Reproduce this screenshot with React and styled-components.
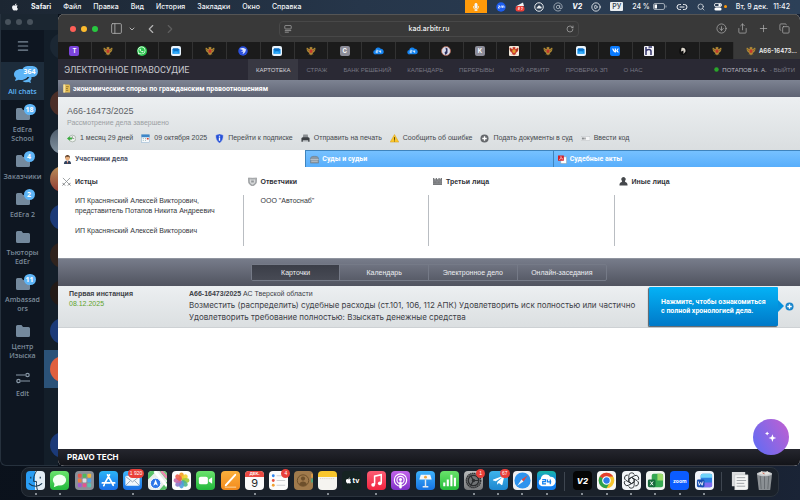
import React, { useState } from "react";
import styled, { createGlobalStyle, css } from "styled-components";
import {
  Search,
  AtSign,
  Link2,
  PanelLeft,
  ChevronDown,
  ChevronLeft,
  ChevronRight,
  RotateCw,
  CircleArrowDown,
  Share,
  Plus,
  Copy,
  Menu,
  CirclePlay,
} from "lucide-react";
import { FaApple, FaMicrophone, FaWhatsapp, FaVk, FaTelegramPlane } from "react-icons/fa";

const GlobalStyle = createGlobalStyle`
  * {
    box-sizing: border-box;
  }

  body {
    margin: 0;
    background: #0b121c;
    font-family: "Liberation Sans", Arial, sans-serif;
  }

  button, input {
    margin: 0;
    padding: 0;
    border: 0;
    background: none;
    color: inherit;
    font: inherit;
  }

  button {
    cursor: pointer;
  }

  a {
    color: inherit;
    text-decoration: none;
  }

  svg {
    display: block;
    flex: none;
  }
`;

const Desktop = styled.div`
  min-height: 100vh;
  display: flex;
  flex-direction: column;
  background: linear-gradient(100deg, #0a111b, #0e1520 60%, #1a2436);
`;

/* ---------- menu bar ---------- */

const MenuBar = styled.header`
  height: 14px;
  padding: 0 10px 1px 11px;
  display: flex;
  justify-content: space-between;
  align-items: center;
  background: linear-gradient(90deg, #1c2632, #26364a 45%, #2c4058);
  color: #f2f4f7;
  font-family: Inter, sans-serif;
  font-size: 7px;
  font-weight: 500;
`;

const MenuList = styled.nav`
  display: flex;
  align-items: center;
  gap: 12px;
`;

const MenuButton = styled.button`
  font-weight: ${(props) => (props.$bold ? 700 : 500)};
`;

const StatusList = styled.div`
  display: flex;
  align-items: center;
  gap: 9px;
  white-space: nowrap;
`;

const MicBadge = styled.span`
  width: 22px;
  height: 13px;
  display: flex;
  align-items: center;
  justify-content: center;
  background: #ff9a0a;
`;

const Keyboard = styled.span`
  padding: 0 2px;
  border-radius: 1px;
  background: #e9edf1;
  color: #2b3a4a;
  line-height: 9px;
`;

const Inline = styled.span`
  display: flex;
  align-items: center;
  gap: ${(props) => props.$gap || 3}px;
`;

const Italic = styled.span`
  font-style: italic;
  font-weight: 800;
`;

/* ---------- windows ---------- */

const Workspace = styled.div`
  flex: 1;
  display: grid;
  grid-template-columns: 44px 14px 1fr;
`;

const ChatFolders = styled.aside`
  display: flex;
  flex-direction: column;
  background: #0e1621;
  border-left: 1px solid #26313d;
  border-bottom: 1px solid #26313d;
  border-bottom-left-radius: 6px;
  color: #7d8c9b;
  font-family: "Open Sans", sans-serif;
  font-size: 7px;
  font-weight: 600;
  line-height: 9px;
`;

const WindowDots = styled.div`
  height: 16px;
  padding: 0 0 1px 4px;
  display: flex;
  align-items: center;
  gap: 5px;
  background: #1b2631;
`;

const Dot = styled.span`
  width: 6px;
  height: 6px;
  border-radius: 50%;
  background: ${(props) => props.$color};
`;

const Hamburger = styled.button`
  height: 32px;
  display: flex;
  align-items: center;
  justify-content: center;
`;

const Folder = styled.button`
  padding: 7px 0 4px;
  display: flex;
  flex-direction: column;
  align-items: center;
  gap: 4px;
  text-align: center;
  ${(props) =>
    props.$active &&
    css`
      background: #1d2c3b;
      color: #5eb5f7;
    `}
`;

const FolderArt = styled.span`
  position: relative;
  display: flex;
  align-items: center;
  height: 14px;
`;

const Counter = styled.span`
  position: absolute;
  top: -3px;
  left: 8px;
  min-width: 11px;
  padding: 0 2px;
  border-radius: 6px;
  background: #5eb5f7;
  color: #fff;
  font-weight: 700;
  line-height: 11px;
`;

const ChatList = styled.div`
  overflow: hidden;
  background: #131e29;
  border-bottom: 1px solid #26313d;
`;

const ChatTop = styled.div`
  height: 70px;
  padding: 3px 0 0 6px;
  border-top: 16px solid #1b2631;
`;

const ChatRow = styled.div`
  height: 38px;
  padding: 6px 0 0 6px;
  background: ${(props) => (props.$active ? "#2b5278" : "none")};
`;

const Avatar = styled.div`
  width: 26px;
  height: 26px;
  border-radius: 50%;
  background: ${(props) => props.$color};
`;

const Browser = styled.div`
  min-width: 0;
  display: flex;
  flex-direction: column;
  overflow: hidden;
  border-radius: 6px;
  background: #fff;
`;

const Toolbar = styled.div`
  height: 28px;
  display: grid;
  grid-template-columns: 1fr 300px 1fr;
  align-items: center;
  background: #393939;
  border-top: 1px solid #555;
  color: #b4b4b4;
`;

const ToolbarLeft = styled.div`
  padding-left: 12px;
  display: flex;
  align-items: center;
  gap: 5px;
`;

const IconButton = styled.button`
  display: flex;
  margin-left: ${(props) => props.$space || 0}px;
  color: ${(props) => (props.$dim ? "#5f5f5f" : "inherit")};
`;

const ToolbarRight = styled.div`
  padding-right: 10px;
  display: flex;
  justify-content: flex-end;
  align-items: center;
  gap: 10px;
`;

const Address = styled.label`
  height: 16px;
  padding: 0 4px;
  display: flex;
  align-items: center;
  border: 1px solid #484848;
  border-radius: 4px;
`;

const AddressInput = styled.input`
  flex: 1;
  min-width: 0;
  color: #f1f1f1;
  font-family: Inter, sans-serif;
  font-size: 7px;
  font-weight: 500;
  text-align: center;
`;

const TabStrip = styled.div`
  height: 17px;
  display: flex;
  background: #1b1b1b;
`;

const SiteTab = styled.button`
  flex: ${(props) => (props.$active ? "0 0 66px" : "1")};
  min-width: 0;
  display: flex;
  align-items: center;
  justify-content: ${(props) => (props.$active ? "flex-end" : "center")};
  gap: 3px;
  border-right: 1px solid #323232;
  background: ${(props) => (props.$active ? "#393939" : "none")};
  color: #f1f1f1;
  font-family: Inter, sans-serif;
  font-size: 6px;
  font-weight: 600;

  &:last-child {
    padding-right: 3px;
    border-right: 0;
  }
`;

/* ---------- site ---------- */

const SiteHeader = styled.div`
  height: 21px;
  padding: 0 5px 0 6px;
  display: flex;
  align-items: center;
  background: #2a2934;
  color: #777783;
  font-size: 6px;
  white-space: nowrap;
`;

const SiteTitle = styled.a`
  width: 184px;
  color: #c9c9cf;
  font-family: Roboto, sans-serif;
  font-size: 9px;
`;

const SiteNav = styled.nav`
  flex: 1;
  display: flex;
  align-self: stretch;
`;

const NavLink = styled.a`
  padding: 0 8px;
  display: flex;
  align-items: center;
  ${(props) =>
    props.$active &&
    css`
      background: #383842;
      color: #d5d5da;
    `}
`;

const UserBox = styled.div`
  display: flex;
  align-items: center;
  gap: 3px;
`;

const UserName = styled.span`
  color: #b9b9c2;
`;

const CaseKind = styled.div`
  height: 17px;
  padding: 0 4px;
  display: flex;
  align-items: center;
  gap: 2px;
  background: linear-gradient(#7d8392, #5e6373);
  color: #fff;
  font-family: Roboto, sans-serif;
  font-size: 7px;
  font-weight: 700;
`;

const CaseInfo = styled.section`
  height: 53px;
  padding: 8px 9px 0;
  background: linear-gradient(#eceff1, #dadee0);
`;

const CaseNumber = styled.h1`
  margin: 0;
  color: #5d6166;
  font-size: 9px;
  font-weight: 400;
  line-height: 12px;
`;

const CaseState = styled.p`
  margin: 0;
  color: #9b9fa3;
  font-size: 7px;
  line-height: 12px;
`;

const Actions = styled.div`
  margin-top: 4px;
  display: flex;
  gap: 8px;
  color: #45494e;
  font-size: 7px;
  line-height: 10px;
  white-space: nowrap;
`;

const Action = styled.span`
  display: flex;
  align-items: center;
  gap: 4px;
`;

const SectionTabs = styled.div`
  height: 17px;
  display: grid;
  grid-template-columns: repeat(3, 1fr);
`;

const SectionTab = styled.button`
  padding: 0 4px;
  display: flex;
  align-items: center;
  gap: 3px;
  border-top: 1px solid #3f84bd;
  border-left: 1px solid #3f84bd;
  background: linear-gradient(#76c1ff, #58aefb);
  color: #fff;
  font-family: Roboto, sans-serif;
  font-size: 7px;
  font-weight: 700;
  ${(props) =>
    props.$active &&
    css`
      border-color: #fff;
      background: #fff;
      color: #4c5266;
    `}
`;

const Participants = styled.section`
  height: 91px;
  padding-top: 10px;
  display: grid;
  grid-template-columns: repeat(4, 1fr);
  grid-template-rows: 18px 51px;
`;

const PartyHead = styled.h2`
  margin: 0;
  padding-left: 4px;
  display: flex;
  gap: 4px;
  color: #2f3238;
  font-size: 7px;
  line-height: 10px;
`;

const PartyBody = styled.div`
  padding: 1px 17px 0;
  border-right: 1px solid #b9bdc2;
  color: #33363b;
  font-size: 7px;
  line-height: 10px;
  white-space: nowrap;

  &:last-child {
    border-right: 0;
  }
`;

const Party = styled.p`
  margin: 0 0 10px;
`;

const ViewBar = styled.div`
  height: 28px;
  display: flex;
  align-items: center;
  justify-content: center;
  border-top: 1px solid #8f949f;
  background: linear-gradient(#777c8a, #50535f);
`;

const ViewSwitch = styled.div`
  width: 48%;
  height: 17px;
  display: grid;
  grid-template-columns: repeat(4, 1fr);
  border: 1px solid #757a87;
  border-radius: 2px;
`;

const ViewButton = styled.button`
  border-right: 1px solid #757a87;
  background: ${(props) =>
    props.$active ? "linear-gradient(#3b3e48, #474a54)" : "none"};
  color: #eceef1;
  font-size: 7px;

  &:last-child {
    border-right: 0;
  }
`;

const Instance = styled.section`
  height: 42px;
  padding: 3px 6px 0 11px;
  display: grid;
  grid-template-columns: 120px 1fr 129px 16px;
  background: linear-gradient(#eceff1, #dbdfe1);
  border-bottom: 1px solid #cdd1d4;
  color: #3d4147;
  font-size: 7px;
  line-height: 10px;
`;

const Stage = styled.div`
  display: flex;
  flex-direction: column;
`;

const StageDate = styled.time`
  color: #5fa32c;
`;

const Ruling = styled.a`
  display: block;
  font-family: Inter, sans-serif;
  font-size: 8px;
  line-height: 12px;
  white-space: nowrap;
`;

const Hint = styled.button`
  position: relative;
  height: 39px;
  margin-top: -2px;
  padding-left: 12px;
  border-radius: 1px;
  background: linear-gradient(#04b2f6, #0079c8);
  box-shadow: -1px 1px 1px #54606a;
  color: #fff;
  font-family: Roboto, sans-serif;
  font-size: 7px;
  font-weight: 700;
  line-height: 9px;
  text-align: left;

  &::after {
    content: "";
    position: absolute;
    left: 100%;
    top: 13px;
    border: 6px solid transparent;
    border-left-color: #0491dd;
    border-right-width: 0;
  }
`;

const ExpandButton = styled.button`
  padding-bottom: 4px;
  display: flex;
  justify-content: flex-end;
  align-items: center;
`;

const Blank = styled.div`
  position: relative;
  flex: 1;
`;

const Assistant = styled.button`
  position: absolute;
  right: 11px;
  bottom: -6px;
  width: 36px;
  height: 36px;
  display: flex;
  align-items: center;
  justify-content: center;
  border-radius: 50%;
  background: linear-gradient(60deg, #5b6df6, #c35fd0);
`;

const SiteFooter = styled.footer`
  height: 17px;
  padding-left: 9px;
  display: flex;
  align-items: center;
  border-bottom: 1px solid #383a42;
  background: linear-gradient(#25262e, #131419);
  color: #fff;
  font-family: Inter, sans-serif;
  font-size: 8px;
  font-weight: 700;
`;

/* ---------- dock ---------- */

const Dock = styled.footer`
  height: 30px;
  margin: 1px 21px 3px;
  padding: 0 4px;
  display: flex;
  justify-content: space-between;
  border: 1px solid #2b333d;
  border-radius: 8px;
  background: #1a212a;
`;

const DockApp = styled.button`
  position: relative;
  padding-top: 3px;
  width: 19px;
  display: flex;
  flex-direction: column;
  align-items: center;
  gap: 3px;
`;

const RunningDot = styled.span`
  width: 2px;
  height: 2px;
  border-radius: 50%;
  background: #a9afb6;
`;

const DockBadge = styled.span`
  position: absolute;
  top: 1px;
  right: -2px;
  min-width: 9px;
  padding: 0 2px;
  border-radius: 5px;
  background: #e9403a;
  color: #fff;
  font-size: 5px;
  line-height: 9px;
`;

const DockLine = styled.span`
  width: 6px;
  margin: 4px 0 5px;
  display: flex;
  justify-content: center;

  &::before {
    content: "";
    width: 1px;
    background: #3e4650;
  }
`;

const Tile = styled.span`
  width: ${(props) => props.$size || 19}px;
  height: ${(props) => props.$size || 19}px;
  display: flex;
  align-items: center;
  justify-content: center;
  overflow: hidden;
  border-radius: ${(props) => props.$round || 4}px;
  background: ${(props) => props.$bg};
  color: ${(props) => props.$color || "#fff"};
  font-family: Inter, sans-serif;
  font-size: ${(props) => props.$font || 6}px;
  font-weight: 700;
`;

const CalendarTile = styled.span`
  width: 19px;
  height: 19px;
  overflow: hidden;
  border-radius: 4px;
  background: #fafafa;
  color: #26282b;
  font-family: Inter, sans-serif;
  font-size: 11px;
  line-height: 13px;
`;

const CalendarMonth = styled.span`
  display: block;
  background: #ea4a42;
  color: #fff;
  font-size: 4px;
  font-weight: 700;
  line-height: 6px;
`;

/* ---------- drawings ---------- */

const Art = ({ size = 19, children }) => (
  <svg width={size} height={size} viewBox="0 0 20 20" fill="none">
    {children}
  </svg>
);

const Eagle = ({ shield = "#c2382c", body = "#b08c36" }) => (
  <Art size={10}>
    <path
      d="M10 3l1.500-1.500L13 3l-1 2 2 1 4-3 1 2-1 5-3 3-2 1 2 3-3-.5L10 19l-2-2.500L5 17l2-3-2-1-3-3-1-5 1-2 4 3 2-1-1-2 1.500-1.500z"
      fill={body}
    />
    <path d="M7 7h6v5l-3 2.500L7 12z" fill={shield} />
    <path d="M3 6l2 4M17 6l-2 4" stroke="#5a4218" strokeWidth="1" />
  </Art>
);

const MailArt = () => (
  <Tile $size={10} $round={2} $bg="#e9f4fd">
    <Art size={8}>
      <path d="M1 6h18v11H1z" fill="#1594ec" />
      <path d="M3 3h12l4 4-9 5-9-5z" fill="#0b6fc4" />
      <path d="M1 17l9-7 9 7z" fill="#37adf8" />
    </Art>
  </Tile>
);

const CloudArt = () => (
  <Art size={11}>
    <path
      d="M5 17a4 4 0 0 1-1-8 5.500 5.500 0 0 1 10-2 5 5 0 0 1 1 10z"
      fill="#1483f0"
    />
    <path
      d="M5.500 9.500h3v2.200h-3v2.300h3.500M11 9.500v2.500h3.500m-.5-2.500v5"
      stroke="#fff"
      strokeWidth="1.200"
    />
  </Art>
);

const FolderShape = () => (
  <svg width="14" height="12" viewBox="0 0 14 12">
    <path
      d="M1.500 0h4l1.500 2h5.500A1.500 1.500 0 0 1 14 3.500v7a1.500 1.500 0 0 1-1.500 1.500h-11A1.500 1.500 0 0 1 0 10.500v-9A1.500 1.500 0 0 1 1.500 0z"
      fill="#74899d"
    />
  </svg>
);

const ChatsShape = () => (
  <svg width="18" height="16" viewBox="0 0 18 16">
    <path
      d="M7 1c4 0 7 2.300 7 5.500S11 12 7 12c-.8 0-1.500-.1-2.200-.3L1 13l1-3C.8 9 0 7.900 0 6.500 0 3.300 3 1 7 1z"
      fill="#5eb5f7"
    />
    <path
      d="M16 7c1.200 1 1.700 2.200 1.500 3.500-.1.900-.6 1.600-1.200 2.200l.7 2.300-2.800-1c-2 .5-4.200.2-5.700-1C13 12.500 15.500 10.500 16 7z"
      fill="#5eb5f7"
    />
  </svg>
);

const EditShape = () => (
  <svg
    width="14"
    height="12"
    viewBox="0 0 14 12"
    fill="none"
    stroke="#8898a7"
    strokeWidth="1.200"
  >
    <path d="M0 3h9M5 9h9" />
    <circle cx="11.500" cy="3" r="1.700" />
    <circle cx="2.500" cy="9" r="1.700" />
  </svg>
);

const actionArt = {
  clock: (
    <Art size={9}>
      <circle cx="12" cy="10" r="7.500" fill="#eef3ee" stroke="#9aa49b" strokeWidth="1.500" />
      <path d="M12 5v5h4" stroke="#6d756e" strokeWidth="1.500" />
      <path d="M0 10l6-5v3h5v4H6v3z" fill="#37ab3c" />
    </Art>
  ),
  date: (
    <Art size={9}>
      <rect x="1" y="2" width="18" height="17" fill="#f6f9fc" stroke="#7fa6c9" />
      <path d="M1 1h18v6H1z" fill="#3d86c8" />
      <path d="M4 10h2M9 10h2M4 14h2M9 14h2" stroke="#8aa" strokeWidth="2" />
      <path d="M13 9h4v3h-4z" fill="#d8412f" />
    </Art>
  ),
  shield: (
    <Art size={9}>
      <path d="M10 0l8 3c0 8-2 13-8 17C4 16 2 11 2 3z" fill="#2450d8" stroke="#8fa4e8" />
      <path d="M10 8v7M10 4v2" stroke="#fff" strokeWidth="3" />
    </Art>
  ),
  printer: (
    <Art size={9}>
      <path d="M5 1h10l1 8H4z" fill="#8a8e92" />
      <path d="M1 9l3-2h12l3 2v8H1z" fill="#3d4044" />
      <path d="M4 14h12v4H4z" fill="#c6cacd" />
    </Art>
  ),
  warning: (
    <Art size={9}>
      <path d="M10 1l9.500 17H.5z" fill="#fbc72c" stroke="#d79d12" />
      <path d="M10 7v6M10 14.500v2" stroke="#4d3b08" strokeWidth="2" />
    </Art>
  ),
  add: (
    <Art size={9}>
      <circle cx="10" cy="10" r="9" fill="#66696d" />
      <path d="M10 5v10M5 10h10" stroke="#fff" strokeWidth="3" />
    </Art>
  ),
  code: (
    <Art size={9}>
      <rect x="0" y="5" width="20" height="10" fill="#f4f5f6" stroke="#b0b4b8" />
      <path d="M2 10h9" stroke="#6d7175" strokeWidth="4" strokeDasharray="2 1" />
    </Art>
  ),
};

const PersonArt = () => (
  <Art size={9}>
    <path d="M2 20c0-6 3-8 8-8s8 2 8 8z" fill="#34455f" />
    <path d="M8 12h4l-2 7z" fill="#fff" />
    <circle cx="10" cy="7" r="5" fill="#e7ae7d" />
    <path d="M4.500 7C4 2 7 0 10 0s6 2 5.500 7L13 4H7z" fill="#5d3a20" />
    <path d="M10 13l1 5-1 1-1-1z" fill="#d14a2f" />
  </Art>
);

const CaseArt = () => (
  <Art size={9}>
    <path d="M1 8c0-4 4-5 9-5s9 1 9 5v10H1z" fill="#8d99a3" stroke="#65717b" />
    <path d="M1 10h18M3 14h14" stroke="#c9d1d7" strokeWidth="1.500" />
  </Art>
);

const ActsArt = () => (
  <Art size={9}>
    <path d="M6 4h13v15H6z" fill="#fff" stroke="#8b8f93" />
    <path d="M0 1h13v12H0z" fill="#d31f27" />
    <path d="M3 10c3-2 4-4 3.500-7C7 7 8 8 11 9 8 8 6 8 3 10z" stroke="#fff" />
  </Art>
);

const SwordsArt = () => (
  <Art size={9}>
    <path d="M2 2l14 14M18 2L4 16" stroke="#8b8f92" strokeWidth="1.800" />
    <path d="M1 13l6 6M19 13l-6 6M16 16l3 3M4 16l-3 3" stroke="#4b4e52" strokeWidth="1.500" />
  </Art>
);

const ShieldArt = () => (
  <Art size={9}>
    <path d="M1 2c6 1 12 1 18 0v8c0 5-4 8-9 10-5-2-9-5-9-10z" fill="#a7aaad" stroke="#77797c" />
    <path d="M4 5c4 1 8 1 12 0v5c0 4-3 5-6 7-3-2-6-3-6-7z" fill="#d8dadb" />
    <path d="M7 8h6v4H7z" fill="#94979a" />
  </Art>
);

const CastleArt = () => (
  <Art size={9}>
    <path d="M0 2h3v3h3V2h3v3h3V2h3v3h2V2h3v16H0z" fill="#77797c" />
    <path d="M0 9h20M0 14h20M5 5v4M13 5v4M9 9v5M16 9v5" stroke="#9fa2a4" />
  </Art>
);

const PawnArt = () => (
  <Art size={9}>
    <path d="M10 0a5 5 0 0 1 3 9l1 2c4 1 5 4 5 8H1c0-4 1-7 5-8l1-2a5 5 0 0 1 3-9z" fill="#45484c" />
  </Art>
);

const KindArt = () => (
  <Art size={9}>
    <path d="M3 1h13l2 3v15H3z" fill="#e4bd55" />
    <path d="M3 1h4v18H3z" fill="#f5e2a2" />
    <path d="M9 6h6M9 10h4M9 14h5" stroke="#74581a" strokeWidth="1.500" />
  </Art>
);

/* ---------- data ---------- */

const folders = [
  { lines: ["All chats"], count: 364, art: <ChatsShape />, active: true },
  { lines: ["EdEra", "School"], count: 18 },
  { lines: ["Заказчики"], count: 4 },
  { lines: ["EdEra 2"], count: 2 },
  { lines: ["Тьюторы", "EdEr"] },
  { lines: ["Ambassad", "ors"], count: 11 },
  { lines: ["Центр", "Изыска"] },
  { lines: ["Edit"], art: <EditShape /> },
];

const chats = [
  "#4b2e28",
  "linear-gradient(#4b5a69, #8494a2)",
  "linear-gradient(#b98f58, #8f3a34)",
  "#1b3a78",
  "#30231d",
  "#231a17",
  "#1b3a78",
  "#e0603f",
  "none",
  "#1b3a78",
];

const siteTabs = [
  ["Tilda", <Tile $size={10} $round={2} $bg="#7b44dc">T</Tile>],
  ["Арбитр", <Eagle />],
  ["WhatsApp", <Tile $size={10} $round={5} $bg="#2cc64e"><FaWhatsapp size={9} /></Tile>],
  ["Почта", <MailArt />],
  ["Арбитр", <Eagle />],
  [
    "Поиск",
    <Art size={10}>
      <circle cx="10" cy="10" r="9.500" fill="#2b50dd" />
      <path d="M3 6c5-3 10-2 13 1-1 5-3 8-7 9l2-5-5 1 4-4z" fill="#dfe6ff" />
    </Art>,
  ],
  ["Почта", <MailArt />],
  ["Арбитр", <Eagle />],
  ["C", <Tile $size={10} $round={2} $bg="#8d8d99">C</Tile>],
  ["Битрикс24", <CloudArt />],
  ["Битрикс24", <CloudArt />],
  [
    "Фото",
    <Art size={10}>
      <circle cx="10" cy="10" r="9" fill="#d9dbe8" stroke="#b0614c" strokeWidth="1.500" />
      <path d="M9 3l4 2v9l-4 4-2-5 3-3z" fill="#2c2f5e" />
    </Art>,
  ],
  ["K", <Tile $size={10} $round={2} $bg="#8d8d99">K</Tile>],
  ["Суд", <Tile $size={10} $round={1} $bg="#f3ead9"><Eagle body="#c8352b" shield="#e0a12c" /></Tile>],
  ["Арбитр", <Eagle />],
  ["Почта", <MailArt />],
  ["ВКонтакте", <Tile $size={10} $round={2} $bg="#0a7bff"><FaVk size={7} /></Tile>],
  [
    "Банк",
    <Tile $size={10} $round={1} $bg="#f2f2f7">
      <Art size={10}>
        <path d="M4 2v16M4 10c3-4 10-4 10 1v7M9 2h7" stroke="#34356b" strokeWidth="3" />
      </Art>
    </Tile>,
  ],
  [
    "Профиль",
    <Art size={10}>
      <circle cx="10" cy="10" r="8" fill="#101010" />
      <path d="M7 4c5-2 9 2 8 7l-4 5V9l-5 2z" fill="#dcd6cc" />
    </Art>,
  ],
  ["Арбитр", <Eagle />],
];

const navItems = [
  "КАРТОТЕКА",
  "СТРАЖ",
  "БАНК РЕШЕНИЙ",
  "КАЛЕНДАРЬ",
  "ПЕРЕРЫВЫ",
  "МОЙ АРБИТР",
  "ПРОВЕРКА ЗП",
  "О НАС",
];

const actions = [
  ["shield", "Перейти к подписке"],
  ["printer", "Отправить на печать"],
  ["warning", "Сообщить об ошибке"],
  ["add", "Подать документы в суд"],
  ["code", "Ввести код"],
];

const sections = [
  ["Участники дела", <PersonArt />],
  ["Суды и судьи", <CaseArt />],
  ["Судебные акты", <ActsArt />],
];

const views = ["Карточки", "Календарь", "Электронное дело", "Онлайн-заседания"];

const petals = [
  "#f59b23",
  "#f1cf2e",
  "#9ccb3c",
  "#4fb58b",
  "#4d9fdc",
  "#8a78c9",
  "#c769a8",
  "#ec5f4f",
];

const dockApps = [
  {
    name: "Finder",
    running: true,
    bg: "linear-gradient(90deg, #2a9df4 50%, #e3edf5 50%)",
    art: (
      <Art>
        <path d="M11 0c-3 5-3 7-3 11h3c0 3 0 6 1 9" stroke="#16364f" />
        <path d="M5 6v2M15 6v2M3 13c4 4 10 4 14 0" stroke="#16364f" strokeWidth="1.200" />
      </Art>
    ),
  },
  {
    name: "Сообщения",
    running: true,
    bg: "linear-gradient(#6be36d, #22b83c)",
    art: (
      <Art>
        <ellipse cx="10" cy="9.500" rx="7" ry="5.800" fill="#f2fff2" />
        <path d="M5 12l-1 5 5-2z" fill="#f2fff2" />
      </Art>
    ),
  },
  {
    name: "Launchpad",
    bg: "#8b9098",
    art: (
      <Art>
        {["#e8574b", "#4fb85a", "#f0b53a", "#ef7d43", "#dcdfe3", "#4ca3e8", "#a45bd0", "#e2568d", "#58c2b2"].map(
          (color, i) => (
            <rect
              key={color}
              x={3 + (i % 3) * 5}
              y={3 + Math.floor(i / 3) * 5}
              width="4"
              height="4"
              rx="1"
              fill={color}
            />
          )
        )}
      </Art>
    ),
  },
  {
    name: "App Store",
    bg: "linear-gradient(#2bb5f7, #1a6fe8)",
    art: (
      <Art>
        <path
          d="M11 4L6 13M9 4l6 11M3.500 12.500h8M14 12.500h2.500M5 15.500l.5-1"
          stroke="#fff"
          strokeWidth="1.800"
          strokeLinecap="round"
        />
      </Art>
    ),
  },
  {
    name: "Почта",
    running: true,
    badge: "1 920",
    bg: "linear-gradient(#3fb8fa, #1a70e6)",
    art: (
      <Art>
        <rect x="2.500" y="5" width="15" height="10.500" rx="1.500" fill="#f2f7fc" />
        <path d="M3 6l7 5.500L17 6M3 15l5-5M17 15l-5-5" stroke="#91a5b8" />
      </Art>
    ),
  },
  {
    name: "Карты",
    bg: "#e9edeb",
    art: (
      <Art>
        <path d="M0 0h9L0 9zM12 20l8-9v9z" fill="#57c067" />
        <path d="M12 0l8 10V0z" fill="#74cf78" />
        <path d="M7 0l13 16" stroke="#fff" strokeWidth="3" />
        <path d="M14 0l6 7" stroke="#ef87b1" strokeWidth="2.500" />
        <circle cx="8" cy="13" r="5.500" fill="#2d75e8" stroke="#fff" />
        <path d="M8 9l2.500 6.500L8 14l-2.500 1.500z" fill="#fff" />
      </Art>
    ),
  },
  {
    name: "Фото",
    bg: "#fdfdfd",
    art: (
      <Art>
        {petals.map((color, i) => (
          <ellipse
            key={color}
            cx="10"
            cy="5.700"
            rx="2.600"
            ry="4"
            fill={color}
            opacity="0.9"
            transform={`rotate(${i * 45} 10 10)`}
          />
        ))}
      </Art>
    ),
  },
  {
    name: "FaceTime",
    bg: "linear-gradient(#6be36d, #22b83c)",
    art: (
      <Art>
        <rect x="3" y="6" width="9.500" height="8" rx="2" fill="#fff" />
        <path d="M13.500 9L17 6.500v7L13.500 11z" fill="#fff" />
      </Art>
    ),
  },
  {
    name: "Pages",
    bg: "linear-gradient(#fbb03c, #f38a1d)",
    art: (
      <Art>
        <path d="M5 15L15 4" stroke="#fff" strokeWidth="2" strokeLinecap="round" />
        <path d="M4 17h12" stroke="#fbd9a5" />
      </Art>
    ),
  },
  { name: "Календарь", running: true, calendar: true },
  {
    name: "Напоминания",
    badge: "4",
    bg: "#fbfbfb",
    art: (
      <Art>
        <path d="M8 5h9M8 10h9M8 15h9" stroke="#c8cacd" />
        <circle cx="4.500" cy="5" r="1.500" fill="#2f86ee" />
        <circle cx="4.500" cy="10" r="1.500" fill="#e8503f" />
        <circle cx="4.500" cy="15" r="1.500" fill="#f0a030" />
      </Art>
    ),
  },
  {
    name: "Контакты",
    bg: "#a07a4c",
    art: (
      <Art>
        <circle cx="9.500" cy="10" r="6" stroke="#6d4f2b" />
        <circle cx="9.500" cy="8" r="2.200" fill="#6d4f2b" />
        <path d="M5.500 14c1-4 7-4 8 0-2 2.500-6 2.500-8 0z" fill="#6d4f2b" />
        <path d="M19 3v4" stroke="#dd9a45" strokeWidth="2" />
        <path d="M19 8v4" stroke="#4ca37c" strokeWidth="2" />
      </Art>
    ),
  },
  {
    name: "Заметки",
    running: true,
    bg: "linear-gradient(#f8c62c 32%, #f5f4f0 32%)",
    art: (
      <Art>
        <path d="M2 8h16" stroke="#cfcabb" strokeDasharray="1 1" />
      </Art>
    ),
  },
  {
    name: "TV",
    bg: "#152322",
    font: 7,
    art: (
      <Inline $gap={1}>
        <FaApple size={7} />
        tv
      </Inline>
    ),
  },
  {
    name: "Музыка",
    running: true,
    bg: "linear-gradient(#fb5c74, #f2243f)",
    art: (
      <Art>
        <path d="M8 14V5.500l7-1.500v8.500" stroke="#fff" strokeWidth="1.600" />
        <circle cx="6.500" cy="14.500" r="2" fill="#fff" />
        <circle cx="13.500" cy="13" r="2" fill="#fff" />
      </Art>
    ),
  },
  {
    name: "Подкасты",
    bg: "linear-gradient(#c263ea, #7f2fc8)",
    art: (
      <Art>
        <circle cx="10" cy="9.500" r="6.500" stroke="#fff" strokeWidth="1.200" />
        <circle cx="10" cy="9.500" r="3.800" stroke="#fff" strokeWidth="1.200" />
        <circle cx="10" cy="9" r="1.600" fill="#fff" />
        <path d="M10 12v5" stroke="#fff" strokeWidth="2.600" strokeLinecap="round" />
      </Art>
    ),
  },
  {
    name: "Keynote",
    bg: "linear-gradient(#3db2fb, #1673e3)",
    art: (
      <Art>
        <path d="M5 4h10l1.500 5h-13z" fill="#f3f7fa" />
        <path d="M10 9v7M7 16.500h6" stroke="#e3ebf2" strokeWidth="1.500" />
        <circle cx="10" cy="6.500" r="1.500" fill="#f0a33c" />
      </Art>
    ),
  },
  {
    name: "Numbers",
    bg: "linear-gradient(#69e26a, #25bd3b)",
    art: (
      <Art>
        <path d="M4.500 16v-4M8.200 16V9M12 16V4M15.700 16V7" stroke="#fff" strokeWidth="2.200" />
      </Art>
    ),
  },
  {
    name: "Настройки",
    running: true,
    badge: "1",
    bg: "linear-gradient(#b9bcbd, #77797b)",
    art: (
      <Art>
        <circle cx="10" cy="10" r="7.500" fill="#6f7274" stroke="#292b2d" strokeWidth="1.500" strokeDasharray="1.500 .6" />
        <circle cx="10" cy="10" r="5.500" stroke="#2b2d2f" strokeWidth="1.300" />
        <path d="M10 10h6M10 10L7 4.800M10 10l-3 5.200" stroke="#2b2d2f" strokeWidth="1.300" />
        <circle cx="10" cy="10" r="1.800" fill="#2b2d2f" />
      </Art>
    ),
  },
  {
    name: "Telegram",
    running: true,
    badge: "67",
    bg: "linear-gradient(#3eb4ec, #1d87cf)",
    art: <FaTelegramPlane size={13} />,
  },
  {
    name: "Safari",
    running: true,
    bg: "#eef0f2",
    art: (
      <Art>
        <circle cx="10" cy="10" r="8.500" fill="#2d93ee" />
        <path d="M15.500 4.500L11 11 9 9z" fill="#e8453c" />
        <path d="M4.500 15.500L9 9l2 2z" fill="#f5f7f9" />
      </Art>
    ),
  },
  {
    name: "Битрикс24",
    running: true,
    bg: "linear-gradient(#18b7a5, #1280f0 55%)",
    art: (
      <Art>
        <path d="M5 16a4 4 0 0 1-1-7.500A5.500 5.500 0 0 1 14 6a5 5 0 0 1 1 10z" fill="#fff" />
        <path d="M5.500 9H9v2.200H6v2.300h3.500M11 9v2.500h4M14 9v5" stroke="#1280f0" strokeWidth="1.300" />
      </Art>
    ),
  },
  null,
  { name: "V2", running: true, bg: "#050505", font: 8, art: <Italic>V2</Italic> },
  {
    name: "Chrome",
    running: true,
    bg: "#f7f8f8",
    art: (
      <Art>
        <circle cx="10" cy="10" r="8.200" fill="#f7c52d" />
        <path d="M10 10L2.900 5.900A8.200 8.200 0 0 1 17.100 5.900L10 6z" fill="#e2402f" />
        <path d="M2.900 5.900A8.200 8.200 0 0 0 10 18.200L13.500 12 10 10z" fill="#2da24c" />
        <circle cx="10" cy="10" r="4" fill="#2f7de9" stroke="#fff" strokeWidth="1.200" />
      </Art>
    ),
  },
  {
    name: "ChatGPT",
    running: true,
    bg: "#f3f6f8",
    art: (
      <Art>
        {[0, 60, 120, 180, 240, 300].map((angle) => (
          <path
            key={angle}
            d="M10 6.800L7.200 8.400V5a3 3 0 0 1 5.800-1.200M7.200 8.400v3.200"
            stroke="#23282c"
            strokeWidth=".9"
            transform={`rotate(${angle} 10 10)`}
          />
        ))}
      </Art>
    ),
  },
  {
    name: "Excel",
    running: true,
    bg: "#f2f6f2",
    art: (
      <Art>
        <rect x="6" y="3" width="12" height="14" rx="2" fill="#35a852" />
        <path d="M12 3h4a2 2 0 0 1 2 2v5h-6z" fill="#9bdc6a" />
        <rect x="2" y="9" width="8" height="8" rx="1.500" fill="#17693a" />
        <path d="M4.500 11l3 4M7.500 11l-3 4" stroke="#fff" />
      </Art>
    ),
  },
  { name: "zoom", running: true, bg: "#0b5cff", font: 5, art: "zoom" },
  {
    name: "Word",
    running: true,
    bg: "#f2f5fa",
    art: (
      <Art>
        <rect x="6" y="3" width="12" height="14" rx="2" fill="#2b7de0" />
        <path d="M6 7V5a2 2 0 0 1 2-2h8a2 2 0 0 1 2 2v2z" fill="#6fd3f8" />
        <path d="M6 12h12v3a2 2 0 0 1-2 2H6z" fill="#7f6cf0" />
        <rect x="2" y="9" width="8" height="8" rx="1.500" fill="#184fb0" />
        <path d="M3.500 11l1 4 1.500-3 1.500 3 1-4" stroke="#fff" strokeWidth=".9" />
      </Art>
    ),
  },
  null,
  {
    name: "Документы",
    bg: "none",
    art: (
      <Art>
        <path d="M2 1h14v15H2z" fill="#d9dbdd" />
        <path d="M5 4h14v16H5z" fill="#f4f5f5" stroke="#b6b9bc" strokeWidth=".5" />
        <path d="M7 7h9M7 10h10M7 13h8M7 16h9" stroke="#9da1a5" />
      </Art>
    ),
  },
  {
    name: "Корзина",
    bg: "none",
    art: (
      <Art>
        <path d="M2 3h16l-2 17H4z" fill="#8b9094" />
        <path d="M5.500 5l1 14M10 5v14M14.500 5l-1 14" stroke="#666b70" />
        <ellipse cx="10" cy="3" rx="8" ry="2.500" fill="#c8cbce" />
        <path d="M4 3l3-3 3 2 3-2 3 3-4 1z" fill="#e4e2dd" />
        <path d="M8 2l2 1" stroke="#c9543f" />
      </Art>
    ),
  },
];

const App = () => {
  const [section, setSection] = useState(sections[0][0]);
  const [view, setView] = useState(views[0]);

  return (
    <>
      <GlobalStyle />
      <Desktop>
        <MenuBar>
          <MenuList>
            <FaApple size={8} />
            {["Safari", "Файл", "Правка", "Вид", "История", "Закладки", "Окно", "Справка"].map(
              (item, i) => (
                <MenuButton key={item} $bold={i === 0}>
                  {item}
                </MenuButton>
              )
            )}
          </MenuList>
          <StatusList>
            <MicBadge>
              <FaMicrophone size={8} />
            </MicBadge>
            <Art size={10}>
              <circle cx="10" cy="10" r="9.500" fill="#1c5df0" />
              <path d="M4 8h4l-4 4h4M10 12V8h3v4m0-4h3v4" stroke="#fff" strokeWidth="1.400" />
            </Art>
            <Art size={10}>
              <path d="M1 9L16 1l2 7z" fill="#f1f3f5" />
              <rect x="1" y="8" width="18" height="11" rx="5" fill="#ee4038" />
              <path d="M6 11h3v2H6v2h3M12 11h3l-2 5" stroke="#fff" strokeWidth="1.200" />
            </Art>
            <Art size={10}>
              <circle cx="10" cy="10" r="8.500" stroke="#e8ebee" strokeWidth="2" />
              <path d="M5 13c0-3 2-3 2-3 1-4 5-4 6-1 3 0 3 4 1 4z" fill="#e8ebee" />
            </Art>
            <AtSign size={10} color="#a9b3bd" />
            <Italic>V2</Italic>
            <CirclePlay size={10} />
            <Keyboard>РУ</Keyboard>
            <Inline>
              24 %
              <svg width="14" height="7" viewBox="0 0 14 7" fill="none">
                <rect x=".5" y=".5" width="11" height="6" rx="1.500" stroke="#9aa5b0" />
                <rect x="1.500" y="1.500" width="2.500" height="4" fill="#fff" />
                <path d="M13 2.500v2" stroke="#9aa5b0" />
              </svg>
            </Inline>
            <Link2 size={12} />
            <Search size={8} />
            <Inline $gap={2}>
              <Art size={8}>
                <rect x="1" y="1" width="18" height="8" rx="4" stroke="#fff" strokeWidth="2" />
                <rect x="1" y="11" width="18" height="8" rx="4" fill="#fff" />
                <circle cx="14" cy="5" r="3" fill="#fff" />
              </Art>
              <Art size={3}>
                <circle cx="10" cy="10" r="10" fill="#ff9a0a" />
              </Art>
            </Inline>
            <Inline $gap={5}>
              <span>Вт, 9 дек.</span>
              <span>11:42</span>
            </Inline>
          </StatusList>
        </MenuBar>

        <Workspace>
          <ChatFolders>
            <WindowDots>
              <Dot $color="#48525c" />
              <Dot $color="#48525c" />
              <Dot $color="#48525c" />
            </WindowDots>
            <Hamburger aria-label="Menu">
              <Menu size={14} strokeWidth={2} />
            </Hamburger>
            {folders.map((folder) => (
              <Folder key={folder.lines[0]} $active={folder.active}>
                <FolderArt>
                  {folder.art || <FolderShape />}
                  {folder.count && <Counter>{folder.count}</Counter>}
                </FolderArt>
                <span>
                  {folder.lines.map((line) => (
                    <div key={line}>{line}</div>
                  ))}
                </span>
              </Folder>
            ))}
          </ChatFolders>
          <ChatList>
            <ChatTop>
              <Avatar $color="#1b2733" />
            </ChatTop>
            {chats.map((color, i) => (
              <ChatRow key={i} $active={i === 7}>
                <Avatar $color={color} />
              </ChatRow>
            ))}
          </ChatList>

          <Browser>
            <Toolbar>
              <ToolbarLeft>
                <Dot $color="#ff5f57" />
                <Dot $color="#febc2e" />
                <Dot $color="#28c840" />
                <IconButton aria-label="Боковая панель" $space={7}>
                  <PanelLeft size={13} strokeWidth={1.500} />
                </IconButton>
                <IconButton aria-label="Группы вкладок">
                  <ChevronDown size={8} strokeWidth={3} />
                </IconButton>
                <IconButton aria-label="Назад" $space={3}>
                  <ChevronLeft size={14} />
                </IconButton>
                <IconButton aria-label="Вперёд" $dim>
                  <ChevronRight size={14} />
                </IconButton>
              </ToolbarLeft>
              <Address>
                <Art size={8}>
                  <rect x="2" y="1" width="16" height="9" rx="2" stroke="#a5a5a5" strokeWidth="2" />
                  <path d="M2 14h16M2 18h10" stroke="#a5a5a5" strokeWidth="2" />
                </Art>
                <AddressInput aria-label="Адрес" defaultValue="kad.arbitr.ru" />
                <RotateCw size={8} />
              </Address>
              <ToolbarRight>
                <IconButton aria-label="Загрузки">
                  <CircleArrowDown size={11} strokeWidth={1.500} />
                </IconButton>
                <IconButton aria-label="Поделиться">
                  <Share size={11} strokeWidth={1.500} />
                </IconButton>
                <IconButton aria-label="Новая вкладка">
                  <Plus size={11} strokeWidth={1.500} />
                </IconButton>
                <IconButton aria-label="Все вкладки">
                  <Copy size={11} strokeWidth={1.500} />
                </IconButton>
              </ToolbarRight>
            </Toolbar>
            <TabStrip>
              {siteTabs.map(([name, icon], i) => (
                <SiteTab key={i} aria-label={name}>
                  {icon}
                </SiteTab>
              ))}
              <SiteTab $active>
                <Eagle />
                А66-16473...
              </SiteTab>
            </TabStrip>

            <SiteHeader>
              <SiteTitle href="#">ЭЛЕКТРОННОЕ ПРАВОСУДИЕ</SiteTitle>
              <SiteNav>
                {navItems.map((item, i) => (
                  <NavLink key={item} href="#" $active={i === 0}>
                    {item}
                  </NavLink>
                ))}
              </SiteNav>
              <UserBox>
                <Art size={5}>
                  <circle cx="10" cy="10" r="9" fill="#2aa52a" />
                </Art>
                <UserName>ПОТАПОВ Н. А.</UserName>
                <a href="#">- ВЫЙТИ</a>
              </UserBox>
            </SiteHeader>
            <CaseKind>
              <KindArt />
              экономические споры по гражданским правоотношениям
            </CaseKind>
            <CaseInfo>
              <CaseNumber>А66-16473/2025</CaseNumber>
              <CaseState>Рассмотрение дела завершено</CaseState>
              <Actions>
                <Action>
                  {actionArt.clock}1 месяц 29 дней
                </Action>
                <Action>
                  {actionArt.date}09 октября 2025
                </Action>
                {actions.map(([icon, label]) => (
                  <Action as="button" key={label}>
                    {actionArt[icon]}
                    {label}
                  </Action>
                ))}
              </Actions>
            </CaseInfo>
            <SectionTabs>
              {sections.map(([label, icon]) => (
                <SectionTab
                  key={label}
                  $active={section === label}
                  onClick={() => setSection(label)}
                >
                  {icon}
                  {label}
                </SectionTab>
              ))}
            </SectionTabs>
            <Participants>
              <PartyHead>
                <SwordsArt />
                Истцы
              </PartyHead>
              <PartyHead>
                <ShieldArt />
                Ответчики
              </PartyHead>
              <PartyHead>
                <CastleArt />
                Третьи лица
              </PartyHead>
              <PartyHead>
                <PawnArt />
                Иные лица
              </PartyHead>
              <PartyBody>
                <Party>
                  ИП Краснянский Алексей Викторович,
                  <br />
                  представитель Потапов Никита Андреевич
                </Party>
                <Party>ИП Краснянский Алексей Викторович</Party>
              </PartyBody>
              <PartyBody>
                <Party>ООО "Автоснаб"</Party>
              </PartyBody>
              <PartyBody />
              <PartyBody />
            </Participants>
            <ViewBar>
              <ViewSwitch>
                {views.map((item) => (
                  <ViewButton
                    key={item}
                    $active={view === item}
                    onClick={() => setView(item)}
                  >
                    {item}
                  </ViewButton>
                ))}
              </ViewSwitch>
            </ViewBar>
            <Instance>
              <Stage>
                <b>Первая инстанция</b>
                <StageDate>08.12.2025</StageDate>
              </Stage>
              <div>
                <b>А66-16473/2025</b> АС Тверской области
                <Ruling href="#">
                  Возместить (распределить) судебные расходы (ст.101, 106, 112 АПК)
                  Удовлетворить иск полностью или частично
                  <br />
                  Удовлетворить требование полностью: Взыскать денежные средства
                </Ruling>
              </div>
              <Hint>
                Нажмите, чтобы ознакомиться
                <br />с полной хронологией дела.
              </Hint>
              <ExpandButton aria-label="Развернуть">
                <Art size={9}>
                  <circle cx="10" cy="10" r="9" fill="#1b86cc" />
                  <path d="M10 5v10M5 10h10" stroke="#fff" strokeWidth="3" />
                </Art>
              </ExpandButton>
            </Instance>
            <Blank>
              <Assistant aria-label="Помощник">
                <Art size={14}>
                  <path d="M12 6l1.500 4 4 1.500-4 1.500L12 17l-1.500-4-4-1.500 4-1.500z" fill="#fff" />
                  <path d="M4.500 2l1 2 2 1-2 1-1 2-1-2-2-1 2-1z" fill="#fff" />
                </Art>
              </Assistant>
            </Blank>
            <SiteFooter>PRAVO TECH</SiteFooter>
          </Browser>
        </Workspace>

        <Dock>
          {dockApps.map((app, i) =>
            app ? (
              <DockApp key={app.name} aria-label={app.name}>
                {app.calendar ? (
                  <CalendarTile>
                    <CalendarMonth>ДЕК.</CalendarMonth>9
                  </CalendarTile>
                ) : (
                  <Tile $bg={app.bg} $font={app.font}>
                    {app.art}
                  </Tile>
                )}
                {app.badge && <DockBadge>{app.badge}</DockBadge>}
                {app.running && <RunningDot />}
              </DockApp>
            ) : (
              <DockLine key={i} />
            )
          )}
        </Dock>
      </Desktop>
    </>
  );
};

export default App;
